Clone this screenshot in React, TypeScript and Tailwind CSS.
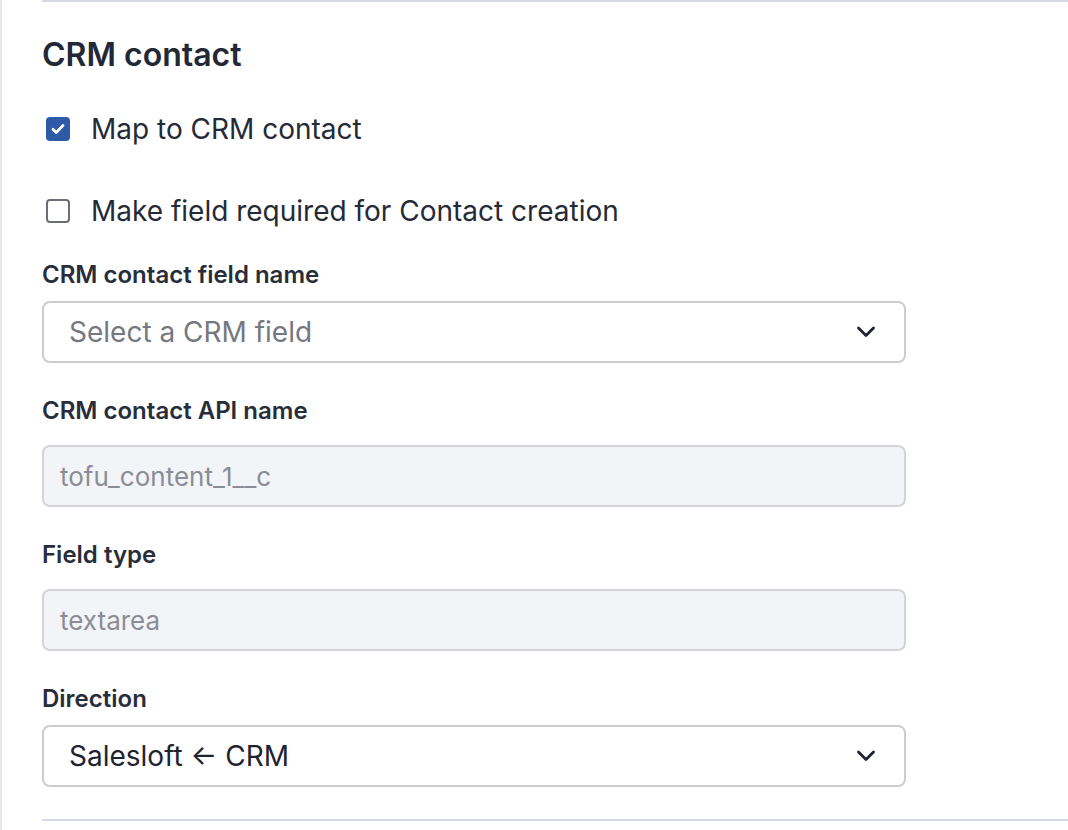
import React from "react";

function Chevron() {
  return (
    <svg width="20" height="20" viewBox="0 0 20 20" fill="none" className="shrink-0">
      <path d="M2.5 6l7.5 7.5L17.5 6" stroke="#1f2230" strokeWidth="2.8" strokeLinecap="round" strokeLinejoin="round" />
    </svg>
  );
}

function Checkbox({ checked, label, className }: { checked?: boolean; label: string; className?: string }) {
  return (
    <label className={"flex items-center h-[40px] pl-[4px] " + (className ?? "")}>
      {checked ? (
        <span className="w-[24px] h-[24px] shrink-0 rounded-[4px] bg-[#2e5aa7] flex items-center justify-center">
          <svg width="18" height="18" viewBox="0 0 18 18" fill="none">
            <path d="M4 9.3l3.2 3.2L14 5.6" stroke="#fff" strokeWidth="2.8" strokeLinecap="round" strokeLinejoin="round" />
          </svg>
        </span>
      ) : (
        <span className="w-[24px] h-[24px] shrink-0 rounded-[4px] border-[2.5px] border-[#6b6e76] bg-white" />
      )}
      <span className="ml-[21px] text-[28px] text-[#252a37]">{label}</span>
    </label>
  );
}

function Label({ children, className }: { children: React.ReactNode; className?: string }) {
  return (
    <div className={"h-[28px] leading-[28px] text-[24px] font-semibold text-[#282d3a] " + (className ?? "")}>
      {children}
    </div>
  );
}

function Select({ value, placeholder, className }: { value?: string; placeholder?: string; className?: string }) {
  return (
    <div
      className={
        "h-[62px] w-[864px] rounded-[8px] border-2 border-[#cbcdd2] bg-white flex items-center justify-between pl-[25px] pr-[28px] " +
        (className ?? "")
      }
    >
      <span className={"text-[28px] " + (value ? "text-[#1f2330]" : "text-[#75787f]")}>{value ?? placeholder}</span>
      <Chevron />
    </div>
  );
}

function ReadOnly({ value, className }: { value: string; className?: string }) {
  return (
    <div
      className={
        "h-[62px] w-[864px] rounded-[8px] border-2 border-[#d2d4d9] bg-[#f3f4f8] flex items-center pl-[16px] " +
        (className ?? "")
      }
    >
      <span className="text-[26px] text-[#8a8d95]">{value}</span>
    </div>
  );
}

export default function App() {
  return (
    <div className="min-h-[830px] bg-white border-l-2 border-[#e6e7eb] font-['Inter','Liberation_Sans',sans-serif]">
      <section className="ml-[40px] border-t-2 border-b-2 border-[#d6d9e3] pt-[33px] pb-[32px]">
        <h2 className="h-[40px] leading-[40px] text-[32px] font-semibold text-[#232836]">CRM contact</h2>

        <Checkbox checked label="Map to CRM contact" className="mt-[34px]" />
        <Checkbox label="Make field required for Contact creation" className="mt-[42px]" />

        <Label className="mt-[30px]">CRM contact field name</Label>
        <Select placeholder="Select a CRM field" className="mt-[12px]" />

        <Label className="mt-[34px]">CRM contact API name</Label>
        <ReadOnly value="tofu_content_1__c" className="mt-[20px]" />

        <Label className="mt-[34px]">Field type</Label>
        <ReadOnly value="textarea" className="mt-[20px]" />

        <Label className="mt-[34px]">Direction</Label>
        <Select value="Salesloft ← CRM" className="mt-[12px]" />
      </section>
    </div>
  );
}
